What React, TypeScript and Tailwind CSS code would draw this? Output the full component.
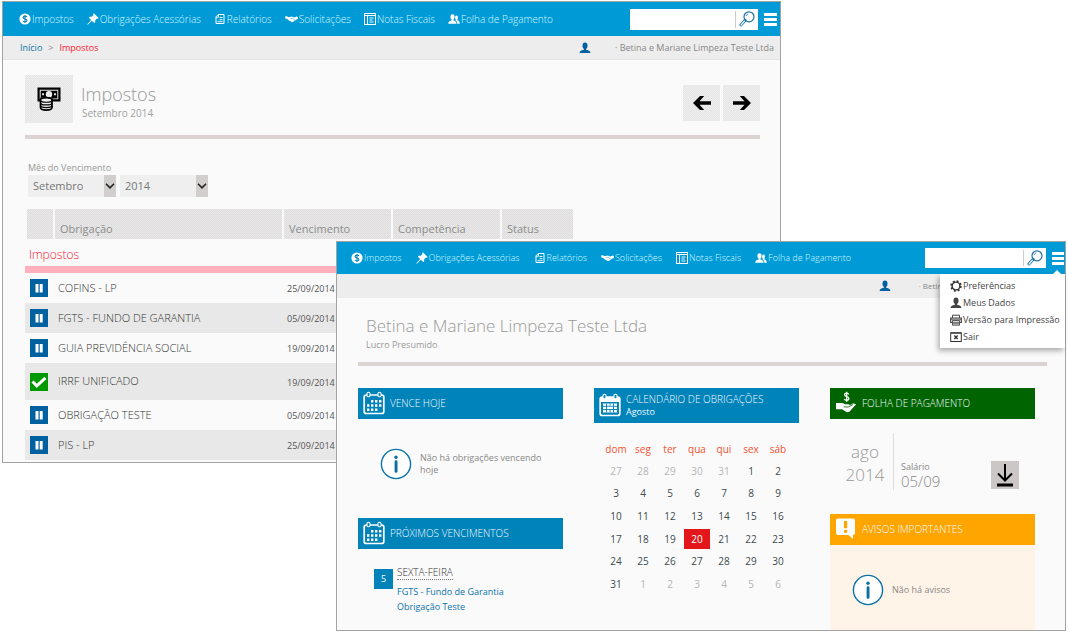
import type { ReactNode } from "react";

const checker =
  "bg-[repeating-conic-gradient(#dedede_0_25%,#e9e7e7_0_50%)] [background-size:2px_2px]";
const lightChecker =
  "bg-[repeating-conic-gradient(#e4e4e4_0_25%,#efefef_0_50%)] [background-size:2px_2px]";

function CoinIcon() {
  return (
    <svg viewBox="0 0 12 12" className="size-3">
      <circle cx="6" cy="6" r="5.6" fill="#fff" />
      <path
        d="M8 4.1C7.6 3.4 6.9 3.1 6 3.1c-1.100 0-1.900.6-1.900 1.400C4.100 6.500 8 5.500 8 7.500 8 8.400 7.100 9 6 9c-1 0-1.800-.4-2.100-1.100M6 2v8"
        fill="none"
        stroke="#0a86bd"
        strokeWidth="1.1"
      />
    </svg>
  );
}

function PinIcon() {
  return (
    <svg viewBox="0 0 12 12" className="size-3">
      <path
        d="M6.800.3 11.700 5 10.700 5.800 9.900 5.500 8.200 7.200 8.200 9.200 7.300 10 4.900 7.700 1 11.600.4 11.700.5 11.100 4.200 7 1.900 4.700 2.700 3.800 4.800 3.800 6.500 2.100 6.100 1.300Z"
        fill="#fff"
      />
    </svg>
  );
}

function ReportIcon() {
  return (
    <svg viewBox="0 0 12 12" className="size-3" fill="none" stroke="#fff">
      <path d="M4.200 1.500h5.800v9h-8V3.800z" strokeWidth="1" />
      <path d="M4.500 1.500v2.700H2M3.500 8.700h5M5.500 6.700H8.500M5.500 4.500h3" strokeWidth=".9" />
    </svg>
  );
}

function HandshakeIcon() {
  return (
    <svg viewBox="0 0 13 12" className="h-3 w-[13px]">
      <path
        d="M0 3.600 1.600 3.200 4 4.300 6.500 3.600 9.300 4.400 11.600 3.600 13 4.300 12.600 6.200 10.800 6.800 8.300 8.700 6.700 9 4 7.600 2.200 6 .4 5.600Z"
        fill="#fff"
      />
      <path d="M5.500 5.600 7.300 5.400 9.800 7" stroke="#0b9bd4" strokeWidth=".5" fill="none" />
    </svg>
  );
}

function InvoiceIcon() {
  return (
    <svg viewBox="0 0 12 12" className="size-3" fill="none" stroke="#fff">
      <rect x=".5" y=".5" width="11" height="11" strokeWidth="1" />
      <path d="M1 2.500h10" strokeWidth="1" />
      <path d="M3.500 3v8M5.500 5h4M5.500 7h3M5.500 9h4" strokeWidth=".9" />
    </svg>
  );
}

function PeopleIcon() {
  return (
    <svg viewBox="0 0 12 12" className="size-3" fill="#fff">
      <ellipse cx="4.500" cy="4" rx="2.100" ry="2.700" />
      <path d="M.3 10.800c0-2.200 1-2.800 3.300-3.300V6h1.900v1.500c2 .5 3 1.100 3 3.300Z" />
      <ellipse cx="8.500" cy="4.700" rx="1.500" ry="2.100" />
      <path d="M9.300 10.800c0-1.900-.6-2.900-1.700-3.400l.4-1.400h1.400v1.500c1.600.4 2.400 1.100 2.400 3.300Z" />
    </svg>
  );
}

function UserIcon({ color }: { color: string }) {
  return (
    <svg viewBox="0 0 12 12" className="size-3 shrink-0" fill={color}>
      <ellipse cx="6" cy="3.800" rx="2.500" ry="3.200" />
      <path d="M.6 11c0-2 1.300-2.600 4.300-3.300V5.500h2.200v2.200c3 .7 4.300 1.300 4.300 3.300Z" />
    </svg>
  );
}

function SearchIcon() {
  return (
    <svg viewBox="0 0 18 18" className="size-[18px]" fill="none" stroke="#1d72a8">
      <circle cx="11" cy="6.800" r="5" strokeWidth="1.200" />
      <path d="M8.200 5.900a3 3 0 0 1 2-2" strokeWidth=".8" />
      <path d="M7.200 10.300 2.900 15" strokeWidth="3" strokeLinecap="round" />
      <path d="M6.400 11.200 3.100 15" stroke="#fff" strokeWidth="1.200" strokeLinecap="round" />
    </svg>
  );
}

function GearIcon() {
  return (
    <svg viewBox="0 0 12 12" className="size-3" fill="none" stroke="#333">
      <circle cx="6" cy="6" r="5" strokeWidth="1.500" strokeDasharray="2 1.930" />
      <circle cx="6" cy="6" r="3.900" strokeWidth="1.400" />
    </svg>
  );
}

function PrinterIcon() {
  return (
    <svg viewBox="0 0 12 12" className="size-3" fill="none" stroke="#444">
      <path d="M2.500 4V1.200h7V4" />
      <path d="M2 8.500H.7V4h10.600v4.500H10" strokeWidth="1.200" />
      <path d="M2.500 6.500h7v4.700h-7zM3 8.300h6M3 9.800h6M1 5.200h10" strokeWidth=".9" />
    </svg>
  );
}

function ExitIcon() {
  return (
    <svg viewBox="0 0 12 12" className="size-3" fill="none" stroke="#333">
      <rect x=".7" y="1.700" width="10.600" height="8.800" />
      <path d="M1 2.200h10" />
      <path d="m4.300 4.500 3.400 3.400m0-3.400L4.300 7.900" strokeWidth="1.400" />
    </svg>
  );
}

function MoneyIcon() {
  return (
    <svg viewBox="0 0 24 24" className="size-6">
      <path d="M.5.500h23v14h-9v-2.500c-1-2-10-2-11 0v2.500h-3z" />
      <path d="M2.700 2.700h18.600v9.600h-5.500l-.8-1.500H3.600l-.9 1.500z" fill="#eee" />
      <path d="M3.700 3.700h16.600v7.700h-4.800l-1.500-1.200H4.800l-1.100 1z" />
      <circle cx="12" cy="7.200" r="3.200" fill="#eee" />
      <path d="M5 6.300h2v2H5zM17 6.300h2v2h-2z" fill="#ddd" />
      <path
        d="M3.500 13c0-3.200 11.500-3.200 11.500 0v7.500c0 3.400-11.500 3.400-11.500 0z"
        fill="#eee"
        stroke="#000"
        strokeWidth="1.700"
      />
      <path
        d="M3.500 13c0 3 11.500 3 11.500 0M3.500 15.700c0 3 11.500 3 11.500 0M3.500 18.300c0 3 11.500 3 11.500 0"
        fill="none"
        stroke="#000"
        strokeWidth="1.200"
      />
    </svg>
  );
}

function ArrowIcon({ flip = false }: { flip?: boolean }) {
  return (
    <svg viewBox="0 0 20 16" className="h-4 w-5">
      <path
        d={
          flip
            ? "M1 8 8 1h4.200L7.500 6.300H19v3.400H7.500l4.700 5.300H8Z"
            : "M19 8 12 1H7.800l4.700 5.300H1v3.400h11.500L7.800 15H12Z"
        }
      />
    </svg>
  );
}

function CalendarIcon({ dense = false }: { dense?: boolean }) {
  return (
    <svg viewBox="0 0 22 24" className="h-6 w-[22px] shrink-0">
      <rect x="1.200" y="4" width="19.600" height="18.500" rx="2" fill="none" stroke="#fff" strokeWidth="1.700" />
      {dense && <path d="M1 4h20v5H1z" fill="#fff" />}
      <rect x="4" y="1.200" width="3" height="4.600" rx="1.400" fill="#0083b9" stroke="#fff" strokeWidth="1.100" />
      <rect x="15" y="1.200" width="3" height="4.600" rx="1.400" fill="#0083b9" stroke="#fff" strokeWidth="1.100" />
      {dense ? (
        <>
          <path d="M4 10.500h14v9H4z" fill="#fff" />
          <path d="M4 13.300h14M4 16.500h14M7.500 10.500v9M14.500 10.500v9M11 17v2.500M11 10.500v2" stroke="#0083b9" strokeWidth=".9" />
        </>
      ) : (
        <path
          d="M8 9h2.400v2.400H8zM12 9h2.400v2.400H12zM16 9h2.400v2.400H16zM4 13.300h2.400v2.400H4zM8 13.300h2.400v2.400H8zM12 13.300h2.400v2.400H12zM16 13.300h2.400v2.400H16zM4 17.600h2.400V20H4zM8 17.600h2.400V20H8zM12 17.600h2.400V20H12z"
          fill="#fff"
        />
      )}
    </svg>
  );
}

function HandMoneyIcon() {
  return (
    <svg viewBox="0 0 22 24" className="h-6 w-[22px] shrink-0">
      <path d="M13.700 3.400C13.300 2.500 12.600 2.200 11.700 2.200c-1.200 0-2.100.6-2.100 1.600 0 2.400 4.300 1.300 4.300 3.800 0 1-.9 1.700-2.200 1.700-1.200 0-2-.5-2.300-1.400M11.700.8v10" fill="none" stroke="#fff" strokeWidth="1.300" />
      <path d="M1 12h5.500c2 0 2.500 1.200 4 1.200h3c1.300 0 1.500 1.500.3 1.900l3.500-2.300c1-.6 2.200-.6 3.700.7l-5.500 6c-1 1.300-2.500 2.200-4 1.500L7 18.200H1Z" fill="#fff" />
      <path d="m8.500 15.800 4.500.3 5-2.500" fill="none" stroke="#006400" strokeWidth=".8" />
    </svg>
  );
}

function AlertIcon() {
  return (
    <svg viewBox="0 0 22 24" className="h-6 w-[22px] shrink-0">
      <path d="M3 1.500h15a2 2 0 0 1 2 2V16a2 2 0 0 1-2 2v4l-4.500-4H3a2 2 0 0 1-2-2V3.500a2 2 0 0 1 2-2Z" fill="#fff" />
      <path d="M9 4h3.200v7.300H9zM9 13h3.200v2.700H9z" fill="#ffa500" />
    </svg>
  );
}

function InfoIcon() {
  return (
    <svg viewBox="0 0 32 32" className="size-8 shrink-0">
      <circle cx="16" cy="16" r="14.600" fill="#fff" stroke="#0a73a8" strokeWidth="1.400" />
      <circle cx="16" cy="9.200" r="1.700" fill="#0a6fa5" />
      <rect x="14.600" y="12.300" width="2.900" height="12.500" rx="1.400" fill="#0a6fa5" />
    </svg>
  );
}

function PauseIcon() {
  return (
    <svg viewBox="0 0 18 18" className="size-[18px]" role="img" aria-label="Pendente">
      <path d="M0 0h18v18H0z" fill="#0061a1" />
      <path d="M5.500 5h3v8.500h-3zM9.700 5h3v8.500h-3z" fill="#fff" />
    </svg>
  );
}

function DoneIcon() {
  return (
    <svg viewBox="0 0 18 18" className="size-[18px]" role="img" aria-label="Concluído">
      <path d="M0 0h18v18H0z" fill="#009a00" />
      <path d="m2.500 8.500 4.300 4.300 8.700-8" fill="none" stroke="#fff" strokeWidth="3" />
    </svg>
  );
}

const navItems = [
  { label: "Impostos", icon: <CoinIcon /> },
  { label: "Obrigações Acessórias", icon: <PinIcon /> },
  { label: "Relatórios", icon: <ReportIcon /> },
  { label: "Solicitações", icon: <HandshakeIcon /> },
  { label: "Notas Fiscais", icon: <InvoiceIcon /> },
  { label: "Folha de Pagamento", icon: <PeopleIcon /> },
];

function TopBar({ compact = false }: { compact?: boolean }) {
  return (
    <header
      className={`flex items-center justify-between bg-[#009bd6] text-[#d4f7ff] ${
        compact ? "h-8 pr-px pl-3.5" : "h-[34px] pr-[3px] pl-4"
      }`}
    >
      <nav className={`flex ${compact ? "gap-3.5" : "gap-[13px]"}`}>
        {navItems.map((item) => (
          <a
            key={item.label}
            href="#"
            className={`flex items-center gap-px font-light whitespace-nowrap ${
              compact ? "text-[9px]" : "text-[10px]"
            }`}
          >
            {item.icon}
            {item.label}
          </a>
        ))}
      </nav>
      <div className="flex items-center gap-1.5">
        <form className={`flex bg-white ${compact ? "h-5 w-[121px]" : "h-[21px] w-32"}`}>
          <input
            type="search"
            aria-label="Pesquisar"
            className="my-0.5 w-0 grow border-r border-[#ccc] outline-none"
          />
          <button type="button" aria-label="Buscar" className="flex w-[22px] items-center justify-center">
            <SearchIcon />
          </button>
        </form>
        <button
          type="button"
          aria-label="Menu"
          className={`flex flex-col gap-0.5 ${compact ? "w-3" : "w-[13px]"}`}
        >
          <span className="h-[3px] w-full bg-white" />
          <span className="h-[3px] w-full bg-white" />
          <span className="h-[3px] w-full bg-white" />
        </button>
      </div>
    </header>
  );
}

function MonthSelect({ label, value }: { label: string; value: string }) {
  return (
    <span className="relative flex">
      <select
        aria-label={label}
        defaultValue={value}
        className="h-[22px] w-[88px] appearance-none bg-[#efefef] pl-[5px] text-[11px] text-[#777] outline-none"
      >
        <option>{value}</option>
      </select>
      <span className="pointer-events-none absolute inset-y-0 right-0 flex w-3 items-center justify-center bg-[#d3cece]">
        <svg viewBox="0 0 10 6" className="h-1.5 w-2.5">
          <path d="m1 .8 4 4 4-4" fill="none" stroke="#222" strokeWidth="1.600" />
        </svg>
      </span>
    </span>
  );
}

const taxes = [
  { name: "COFINS - LP", due: "25/09/2014" },
  { name: "FGTS - FUNDO DE GARANTIA", due: "05/09/2014" },
  { name: "GUIA PREVIDÊNCIA SOCIAL", due: "19/09/2014" },
  { name: "IRRF UNIFICADO", due: "19/09/2014", done: true },
  { name: "OBRIGAÇÃO TESTE", due: "05/09/2014" },
  { name: "PIS - LP", due: "25/09/2014" },
];

function HeadCell({ children, width }: { children?: ReactNode; width: string }) {
  return (
    <th
      className={`h-[30px] border-l-2 border-[#fafafa] bg-clip-padding pt-2.5 pl-[5px] text-left text-[11px] font-normal text-[#8c8c8c] ${checker} ${width}`}
    >
      {children}
    </th>
  );
}

function TaxesWindow() {
  return (
    <section className="mt-px mr-[287px] ml-0.5 self-start border border-[#a3a3a3] bg-[#fafafa] [grid-area:1/1]">
      <TopBar />
      <div className="flex h-6 items-center justify-between border-b border-[#e4e4e4] bg-[#ededed] pr-1.5 pl-[17px]">
        <div className="flex gap-1.5 text-[9px]">
          <a href="#" className="text-[#0a73a8]">Início</a>
          <span className="text-[#888]">&gt;</span>
          <span className="text-[#ff2030]">Impostos</span>
        </div>
        <div className="flex items-center gap-6 text-[9px] text-[#888]">
          <UserIcon color="#0061a1" />
          <span>· Betina e Mariane Limpeza Teste Ltda</span>
        </div>
      </div>
      <div className="pr-5 pl-[22px]">
        <div className="flex h-[79px] items-center justify-between border-b-4 border-[#dcd2d2] pt-[3px]">
          <div className="flex items-center gap-2">
            <div className={`flex size-12 items-center justify-center ${lightChecker}`}>
              <MoneyIcon />
            </div>
            <div className="pt-[3px]">
              <h1 className="text-[18px] leading-6 font-light text-[#999]">Impostos</h1>
              <p className="pl-px text-[10px] leading-[14px] text-[#a0a0a0]">Setembro 2014</p>
            </div>
          </div>
          <div className="flex gap-[3px] pt-2">
            <button type="button" aria-label="Mês anterior" className={`flex h-9 w-[37px] items-center justify-center ${lightChecker}`}>
              <ArrowIcon flip />
            </button>
            <button type="button" aria-label="Próximo mês" className={`flex h-9 w-[37px] items-center justify-center ${lightChecker}`}>
              <ArrowIcon />
            </button>
          </div>
        </div>
        <fieldset className="mt-[22px] ml-[3px]">
          <legend className="text-[9px] leading-[14px] text-[#999]">Mês do Vencimento</legend>
          <div className="flex gap-1">
            <MonthSelect label="Mês" value="Setembro" />
            <MonthSelect label="Ano" value="2014" />
          </div>
        </fieldset>
        <table className="mt-3 mb-0.5 w-[548px] table-fixed border-separate border-spacing-0">
          <thead>
            <tr>
              <HeadCell width="w-7" />
              <HeadCell width="w-[229px]">Obrigação</HeadCell>
              <HeadCell width="w-[109px]">Vencimento</HeadCell>
              <HeadCell width="w-[109px]">Competência</HeadCell>
              <HeadCell width="w-[73px]">Status</HeadCell>
            </tr>
          </thead>
          <tbody>
            <tr>
              <th
                colSpan={5}
                className="h-[34px] border-b-[7px] border-[#ffb0bd] pt-1 pl-1 text-left text-xs font-light text-[#ff2030]"
              >
                Impostos
              </th>
            </tr>
            {taxes.map((tax) => (
              <tr key={tax.name} className="even:bg-transparent odd:bg-[#e8e8e8]">
                <td className={`pl-[5px] ${tax.done ? "h-[37px]" : "h-[30px]"}`}>
                  {tax.done ? <DoneIcon /> : <PauseIcon />}
                </td>
                <td className="pl-[5px] text-[11px] font-light text-[#333]">{tax.name}</td>
                <td className="pt-0.5 pl-[5px] text-[9px] text-[#555]">{tax.due}</td>
                <td />
                <td />
              </tr>
            ))}
          </tbody>
        </table>
      </div>
    </section>
  );
}

const menuItems = [
  { label: "Preferências", icon: <GearIcon /> },
  { label: "Meus Dados", icon: <UserIcon color="#444" /> },
  { label: "Versão para Impressão", icon: <PrinterIcon /> },
  { label: "Sair", icon: <ExitIcon /> },
];

function UserMenu() {
  return (
    <div className="absolute top-8 right-0 z-10 w-[125px] bg-white py-[3px] shadow-[-2px_3px_5px_rgba(0,0,0,0.3)]">
      <svg viewBox="0 0 10 5" className="absolute -top-1 right-[3px] h-[5px] w-2.5">
        <path d="M0 5 5 0l5 5Z" fill="#fff" />
      </svg>
      <ul>
        {menuItems.map((item) => (
          <li key={item.label}>
            <a href="#" className="flex h-[17px] items-center gap-px pl-2.5 text-[9px] whitespace-nowrap text-[#444]">
              {item.icon}
              {item.label}
            </a>
          </li>
        ))}
      </ul>
    </div>
  );
}

function PanelHeader({
  icon,
  title,
  subtitle,
  color = "bg-[#0083b9]",
}: {
  icon: ReactNode;
  title: string;
  subtitle?: string;
  color?: string;
}) {
  return (
    <div className={`flex items-center gap-[5px] pb-0.5 pl-[5px] text-[#f0faff] ${subtitle ? "h-[35px]" : "h-[31px]"} ${color}`}>
      {icon}
      <div>
        <h2 className="text-[10px] leading-[14px] font-light">{title}</h2>
        {subtitle && <p className="text-[9px] leading-3">{subtitle}</p>}
      </div>
    </div>
  );
}

const weekDays = ["dom", "seg", "ter", "qua", "qui", "sex", "sáb"];
const weeks = [
  [27, 28, 29, 30, 31, 1, 2],
  [3, 4, 5, 6, 7, 8, 9],
  [10, 11, 12, 13, 14, 15, 16],
  [17, 18, 19, 20, 21, 22, 23],
  [24, 25, 26, 27, 28, 29, 30],
  [31, 1, 2, 3, 4, 5, 6],
];

function dayColor(week: number, day: number) {
  if (week === 3 && day === 20) return "bg-[#e3171b] text-white";
  if ((week === 0 && day > 20) || (week === 5 && day < 20)) return "text-[#b5b5b5]";
  return "text-[#3d4a4d]";
}

function Calendar() {
  return (
    <table className="mt-[15px] ml-2 h-[158px] table-fixed border-separate border-spacing-x-px border-spacing-y-0">
      <thead>
        <tr>
          {weekDays.map((day) => (
            <th key={day} className="h-[22px] w-[26px] p-0 text-[10px] font-normal text-[#f4502f]">
              {day}
            </th>
          ))}
        </tr>
      </thead>
      <tbody>
        {weeks.map((week, row) => (
          <tr key={week[0]}>
            {week.map((day) => (
              <td key={day} className="h-[22px] p-0 text-center text-[10px]">
                <span className={`flex h-5 items-center justify-center ${dayColor(row, day)}`}>{day}</span>
              </td>
            ))}
          </tr>
        ))}
      </tbody>
    </table>
  );
}

function DashboardWindow() {
  return (
    <section className="relative mt-[241px] mr-0.5 ml-[336px] self-start border border-[#a3a3a3] bg-[#fafafa] [grid-area:1/1]">
      <TopBar compact />
      <UserMenu />
      <div className="flex h-6 items-center justify-end gap-7 bg-[#ededed] pr-[5px] text-[8px] text-[#888]">
        <UserIcon color="#0061a1" />
        <span>· Betina e Mariane Limpeza Teste Ltda</span>
      </div>
      <div className="pr-[18px] pl-[21px]">
        <div className="border-b-4 border-[#dcd2d2] pt-4 pb-2.5 pl-2">
          <h1 className="text-[17px] leading-6 font-light text-[#999]">Betina e Mariane Limpeza Teste Ltda</h1>
          <p className="text-[9px] leading-[14px] text-[#999]">Lucro Presumido</p>
        </div>
        <div className="mt-[22px] mr-3 grid grid-cols-3 gap-[31px]">
          <div>
            <PanelHeader icon={<CalendarIcon />} title="VENCE HOJE" />
            <div className="mb-[38px] flex items-center gap-2 pt-[29px] pr-5 pl-[22px] text-[9px] leading-3 text-[#888]">
              <InfoIcon />
              <p>Não há obrigações vencendo hoje</p>
            </div>
            <PanelHeader icon={<CalendarIcon />} title="PRÓXIMOS VENCIMENTOS" />
            <div className="mt-[17px] ml-4 flex gap-1">
              <div className="mt-[3px] flex h-5 w-[19px] items-center justify-center bg-[#0083b9] text-[9px] text-white">
                5
              </div>
              <div className="text-[9px] leading-[15px] text-[#0a73a8]">
                <h3 className="mb-1 w-fit border-b border-dotted border-[#777] text-[10px] leading-[13px] font-light text-[#333]">
                  SEXTA-FEIRA
                </h3>
                <a href="#" className="block">FGTS - Fundo de Garantia</a>
                <a href="#" className="block">Obrigação Teste</a>
              </div>
            </div>
          </div>
          <div>
            <PanelHeader icon={<CalendarIcon dense />} title="CALENDÁRIO DE OBRIGAÇÕES" subtitle="Agosto" />
            <Calendar />
          </div>
          <div className="flex flex-col">
            <PanelHeader icon={<HandMoneyIcon />} title="FOLHA DE PAGAMENTO" color="bg-[#006400]" />
            <div className="mt-[14px] mb-6 flex h-[57px] pr-4 pl-[11px]">
              <div className="flex w-[53px] flex-col justify-center border-r border-[#ddd] pt-[3px] pr-1 text-center text-[17px] leading-[23px] font-light text-[#999]">
                <span>ago</span>
                <span>2014</span>
              </div>
              <div className="flex grow flex-col justify-end pl-[7px] text-[#888]">
                <span className="text-[9px] leading-[11px]">Salário</span>
                <span className="text-[15px] leading-[18px] font-light">05/09</span>
              </div>
              <button
                type="button"
                aria-label="Baixar"
                className="mt-7 flex size-7 items-center justify-center bg-[#cbc7c7]"
              >
                <svg viewBox="0 0 20 24" className="h-6 w-5" fill="none" stroke="#000">
                  <path d="M10 1v16M3 10.500l7 7 7-7" strokeWidth="2" />
                  <path d="M2 22h16" strokeWidth="3" />
                </svg>
              </button>
            </div>
            <PanelHeader icon={<AlertIcon />} title="AVISOS IMPORTANTES" color="bg-[#ffa500]" />
            <div className="flex h-[85px] items-center gap-2 bg-[repeating-conic-gradient(#fff1e2_0_25%,#fff7ed_0_50%)] [background-size:2px_2px] pt-[5px] pl-[22px] text-[9px] text-[#888]">
              <InfoIcon />
              <p>Não há avisos</p>
            </div>
          </div>
        </div>
      </div>
    </section>
  );
}

export default function App() {
  return (
    <main className="grid min-h-screen bg-white font-['Open_Sans','Noto_Sans',sans-serif]">
      <TaxesWindow />
      <DashboardWindow />
    </main>
  );
}
